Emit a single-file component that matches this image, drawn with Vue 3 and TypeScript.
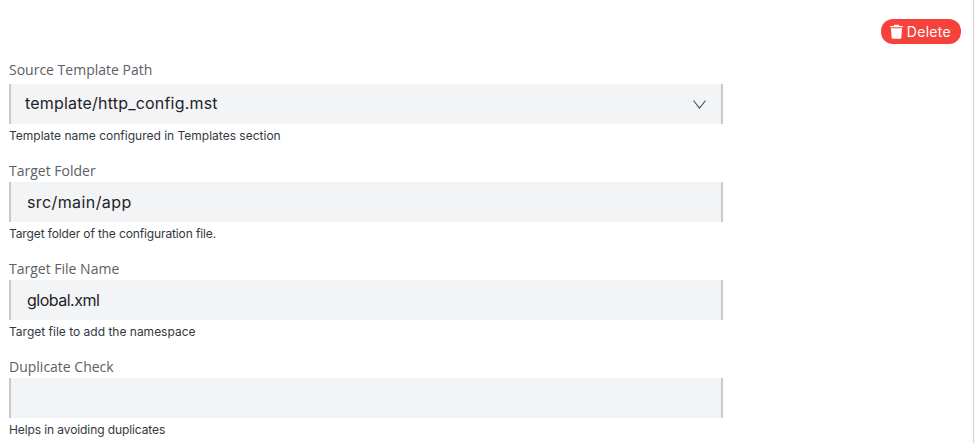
<template>
  <div class="page">
    <div class="toolbar">
      <button class="delete-btn" type="button">
        <svg class="trash" viewBox="0 0 14 16" width="13" height="15">
          <path d="M4.6 0.6h4.8l0.7 1.4H13.4c0.4 0 0.6 0.3 0.6 0.6v0.8H0V2.6C0 2.3 0.2 2 0.6 2h3.3z" fill="#fff" />
          <path d="M1 4.4h12l-0.8 10.3c-0.1 0.7-0.6 1.2-1.3 1.2H3.1c-0.7 0-1.2-0.5-1.3-1.2z" fill="#fff" />
        </svg>
        Delete
      </button>
    </div>

    <div v-for="field in fields" :key="field.label" class="field" :class="{ first: field.select }">
      <label class="field-label">{{ field.label }}</label>
      <div class="field-box" :class="{ select: field.select }">
        <span class="field-value" :style="{ letterSpacing: field.valueTrack + 'px' }">{{ field.value }}</span>
        <svg v-if="field.select" class="chevron" viewBox="0 0 13 9" width="13" height="9">
          <path d="M0.5 0.5 6.5 8.2 12.5 0.5" fill="none" stroke="#555a61" stroke-width="1.2" />
        </svg>
      </div>
      <div class="field-help" :style="{ letterSpacing: field.helpTrack + 'px' }">{{ field.help }}</div>
    </div>
  </div>
</template>

<script setup lang="ts">
interface Field {
  label: string
  value: string
  help: string
  valueTrack: number
  helpTrack: number
  select?: boolean
}

// Poppins is not installed, so tracking evens out the widths per line
const fields: Field[] = [
  {
    label: 'Source Template Path',
    value: 'template/http_config.mst',
    help: 'Template name configured in Templates section',
    valueTrack: 0.2,
    helpTrack: 0,
    select: true,
  },
  {
    label: 'Target Folder',
    value: 'src/main/app',
    help: 'Target folder of the configuration file.',
    valueTrack: 0.4,
    helpTrack: -0.12,
  },
  {
    label: 'Target File Name',
    value: 'global.xml',
    help: 'Target file to add the namespace',
    valueTrack: -0.5,
    helpTrack: 0,
  },
  {
    label: 'Duplicate Check',
    value: '',
    help: 'Helps in avoiding duplicates',
    valueTrack: 0,
    helpTrack: -0.1,
  },
]
</script>

<style>
html,
body {
  margin: 0;
  background: #fff;
  overflow: hidden;
}
</style>

<style scoped>
.page {
  box-sizing: border-box;
  width: 974px;
  height: 443px;
  padding: 19px 12px 0 9px;
  border-right: 1px solid #d2d2d2;
  font-family: Inter, "Noto Sans", sans-serif;
}

.toolbar {
  display: flex;
  justify-content: flex-end;
  height: 39px;
}

.delete-btn {
  display: flex;
  align-items: center;
  gap: 4px;
  height: 25px;
  padding: 0 10px 0 9px;
  border: none;
  border-radius: 12px;
  background: #f6423a;
  color: #fff;
  font-family: inherit;
  font-size: 14px;
  letter-spacing: 0.3px;
}

.field {
  width: 714px;
  height: 98px;
}

.field-label {
  display: block;
  height: 26px;
  padding-top: 2px;
  box-sizing: border-box;
  font-family: "Open Sans", sans-serif;
  font-size: 14px;
  line-height: 26px;
  color: #5c6066;
}

.field.first .field-label {
  padding-top: 0;
  line-height: 24px;
}

.field-box {
  box-sizing: border-box;
  display: flex;
  align-items: center;
  justify-content: space-between;
  height: 40px;
  padding: 0 15px 0 16px;
  border-left: 2px solid #c9c9c9;
  border-right: 2px solid #c9c9c9;
  background: #f3f4f6;
}

.field-box.select {
  padding-left: 14px;
}

.field-value {
  font-size: 16px;
  color: #1f2328;
}

.field-box.select .field-value {
  margin-top: -2px;
}

.field-help {
  margin-top: 4px;
  font-size: 12px;
  line-height: 16px;
  color: #33383e;
}
</style>
